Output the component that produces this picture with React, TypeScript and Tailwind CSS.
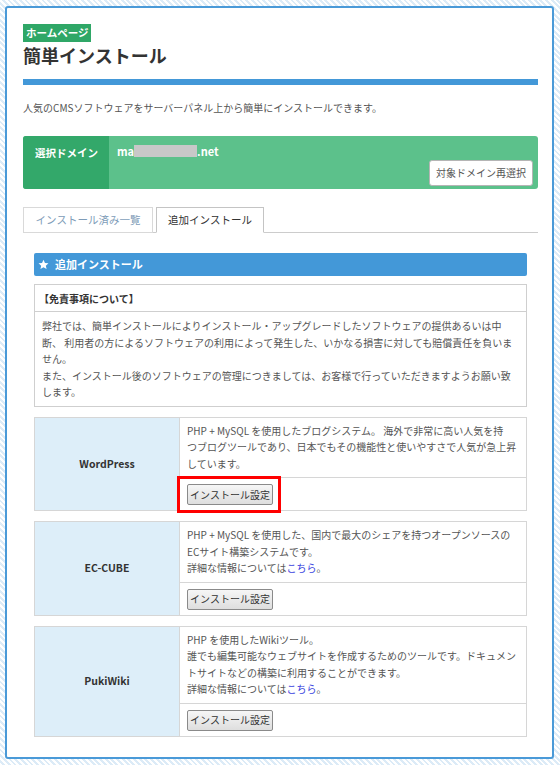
import React from "react";

const FONT = { fontFamily: '"Noto Sans CJK JP", "Noto Sans", sans-serif' };

function InstallButton() {
  return (
    <button className="block h-[21px] w-[86px] rounded-[2px] border border-[#8a8a8a] bg-[linear-gradient(#f6f6f6,#dedede)] text-[10px] leading-none text-[#333]">
      インストール設定
    </button>
  );
}

function Link() {
  return <span className="text-[#3b45e0]">こちら</span>;
}

function AppRow({
  name,
  lines,
  highlight,
}: {
  name: string;
  lines: React.ReactNode[];
  highlight?: boolean;
}) {
  return (
    <div className="mt-[10px] flex border border-[#d6d6d6]">
      <div className="flex w-[145px] shrink-0 items-center justify-center border-r border-[#d6d6d6] bg-[#ddeef9] text-[10.5px] font-bold text-[#333]">
        {name}
      </div>
      <div className="flex flex-1 flex-col">
        <div className="px-[7px] py-[5px] text-[10px] leading-[16.5px] text-[#555]">
          {lines.map((l, i) => (
            <div key={i} className="whitespace-nowrap">
              {l}
            </div>
          ))}
        </div>
        <div className="relative flex border-t border-[#d6d6d6] px-[7px] pb-[5px] pt-[6px]">
          <InstallButton />
          {highlight && (
            <div className="absolute left-[-3px] top-[-2px] h-[37px] w-[104px] border-[3px] border-[#ff0000]" />
          )}
        </div>
      </div>
    </div>
  );
}

export default function App() {
  return (
    <div
      style={FONT}
      className="h-[765px] w-[560px] overflow-hidden bg-[repeating-linear-gradient(45deg,#ffffff_0px,#ffffff_2px,#dcebf7_2px,#dcebf7_4px)] pl-[5px] pt-[6px]"
    >
      <div className="h-[753px] w-[549px] rounded-[3px] border-2 border-[#4a9ad8] bg-white pl-[16px] pr-[14px] pt-[16px]">
        <div className="w-fit bg-[#2fa767] px-[3px] text-[10.5px] font-bold leading-[18px] text-white">
          ホームページ
        </div>
        <h1 className="mt-[1px] text-[18px] font-bold leading-[24px] text-[#333]">
          簡単インストール
        </h1>
        <div className="mt-[12px] h-[6px] bg-[#4398d8]" />
        <p className="mt-[15px] text-[10px] leading-[16px] text-[#555]">
          人気のCMSソフトウェアをサーバーパネル上から簡単にインストールできます。
        </p>

        <div className="mt-[20px] flex h-[53px] overflow-hidden rounded-[3px] bg-[#5cc18b]">
          <div className="flex w-[86px] items-start bg-[#33a86a] pl-[12px] pt-[10px] text-[10.5px] font-bold leading-[14px] text-white">
            選択ドメイン
          </div>
          <div className="flex flex-1 flex-col">
            <div className="flex items-center pl-[8px] pt-[8px] text-[11px] font-bold leading-[14px] text-white">
              <span>ma</span>
              <span className="inline-block h-[12px] w-[63px] bg-[#c8c8c8]" />
              <span>.net</span>
            </div>
            <div className="flex justify-end pr-[5px] pt-[2px]">
              <button className="block h-[26px] w-[104px] rounded-[3px] border border-[#b5b5b5] bg-white text-[10px] leading-none text-[#555]">
                対象ドメイン再選択
              </button>
            </div>
          </div>
        </div>

        <div className="mt-[18px] flex gap-[3px] border-b border-[#cccccc]">
          <div className="-mb-px flex h-[26px] w-[130px] items-center justify-center border border-[#d9d9d9] bg-white text-[10.5px] text-[#7e9cb8]">
            インストール済み一覧
          </div>
          <div className="-mb-px flex h-[26px] w-[108px] items-center justify-center border border-b-white border-[#c4c4c4] bg-white text-[10.5px] text-[#333]">
            追加インストール
          </div>
        </div>

        <div className="px-[11px] pt-[20px]">
          <div className="flex h-[23px] items-center gap-[6px] rounded-[2px] bg-[#4398d8] pl-[4px] text-[11px] font-bold text-white">
            <svg width="11" height="11" viewBox="0 0 24 24" fill="white">
              <path d="M12 1.5l3.2 7 7.6.8-5.7 5.2 1.6 7.5L12 18.2 5.3 22l1.6-7.5L1.2 9.3l7.6-.8z" />
            </svg>
            <span>追加インストール</span>
          </div>

          <div className="mt-[8px] border border-[#cfcfcf]">
            <div className="flex h-[27px] items-center border-b border-[#cfcfcf] pl-[4px] text-[10px] font-bold text-[#333]">
              【免責事項について】
            </div>
            <div className="px-[7px] pb-[5px] pt-[6px] text-[10px] leading-[16.5px] text-[#555]">
              <div className="whitespace-nowrap">
                弊社では、簡単インストールによりインストール・アップグレードしたソフトウェアの提供あるいは中
              </div>
              <div className="whitespace-nowrap">
                断、 利用者の方によるソフトウェアの利用によって発生した、いかなる損害に対しても賠償責任を負いま
              </div>
              <div className="whitespace-nowrap">せん。</div>
              <div className="whitespace-nowrap">
                また、インストール後のソフトウェアの管理につきましては、お客様で行っていただきますようお願い致
              </div>
              <div className="whitespace-nowrap">します。</div>
            </div>
          </div>

          <AppRow
            name="WordPress"
            highlight
            lines={[
              "PHP + MySQL を使用したブログシステム。 海外で非常に高い人気を持",
              "つブログツールであり、日本でもその機能性と使いやすさで人気が急上昇",
              "しています。",
            ]}
          />
          <AppRow
            name="EC-CUBE"
            lines={[
              "PHP + MySQL を使用した、国内で最大のシェアを持つオープンソースの",
              "ECサイト構築システムです。",
              <>
                詳細な情報については<Link />。
              </>,
            ]}
          />
          <AppRow
            name="PukiWiki"
            lines={[
              "PHP を使用したWikiツール。",
              "誰でも編集可能なウェブサイトを作成するためのツールです。ドキュメン",
              "トサイトなどの構築に利用することができます。",
              <>
                詳細な情報については<Link />。
              </>,
            ]}
          />
        </div>
      </div>
    </div>
  );
}
